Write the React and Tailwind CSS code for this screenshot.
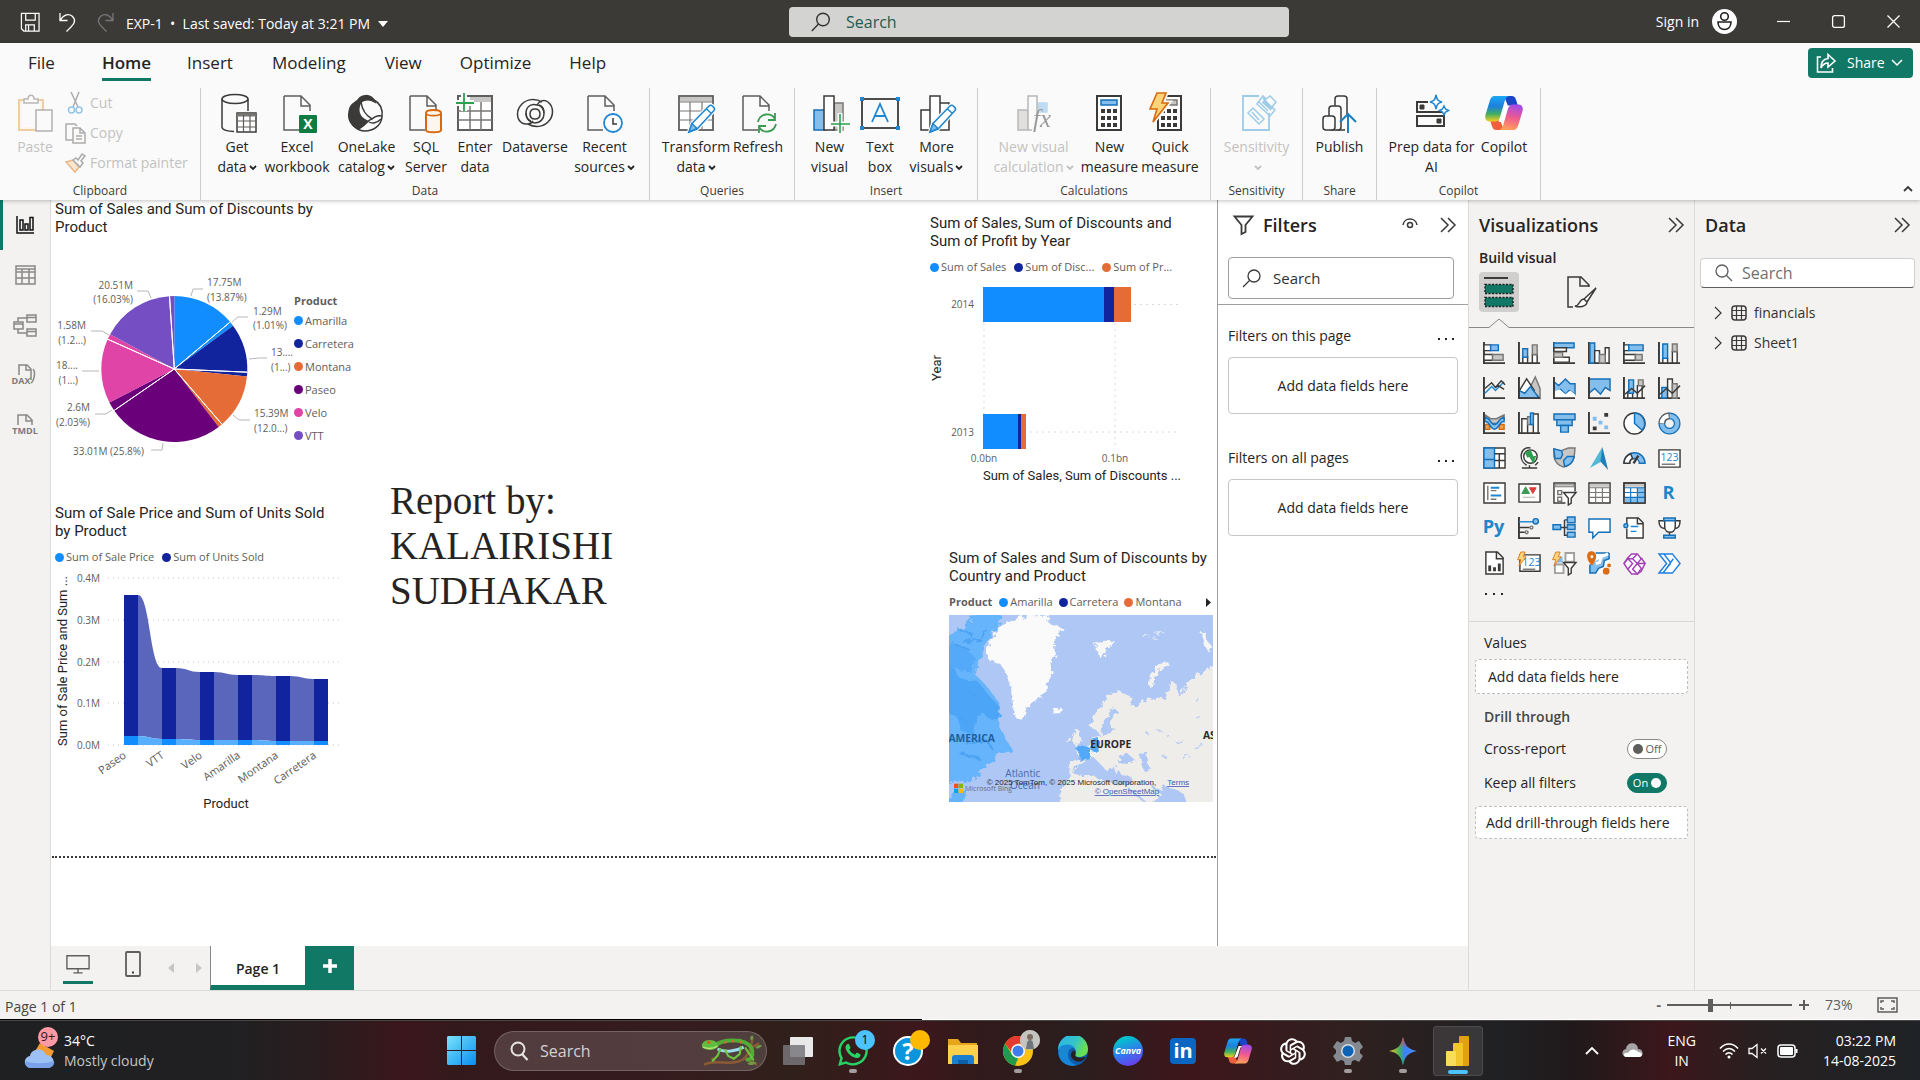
import React from "react";
import { AiOutlineOpenAI } from "react-icons/ai";
import { FaWhatsapp } from "react-icons/fa";

const INK = "#3b3a39";
const BLUE = "#83beec";
const EDGE = "#1570b8";
const GRAY = "#c8c6c4";
const MID = "#797774";
const TEAL = "#117865";

function Icon({ w, h, vb, children, className = "" }) {
  return (
    <svg width={w} height={h} viewBox={vb || `0 0 ${w} ${h}`} fill="none" stroke={INK} strokeWidth="1.5" className={"shrink-0 overflow-visible " + className} aria-hidden="true">
      {children}
    </svg>
  );
}

/* ---------- title bar ---------- */

function TitleBar() {
  return (
    <header className="grid h-[43px] shrink-0 grid-cols-[789fr_500fr_631fr] items-center bg-[#3b3a37] text-white">
      <div className="flex items-center pl-5 pt-1">
        <button aria-label="Save" className="mb-1 w-[38px]">
          <Icon w={20} h={20} vb="0 0 21 21">
            <path d="M1.500 1.500h18.500v18.500H4L1.500 17.500zM6 1.500v7h10v-7M6 20v-6.500h9V20M9 14v6" stroke="#fff" strokeWidth="1.300" />
          </Icon>
        </button>
        <button aria-label="Undo" className="mb-1 w-[37px]">
          <Icon w={18} h={20}>
            <path d="M2 1v7.500h7.500M2 8.500C6 2 11 1.500 14 4c4 3.500 3 7-1 11l-4.500 4.500" stroke="#fff" strokeWidth="1.300" />
          </Icon>
        </button>
        <button aria-label="Redo" className="mb-1 w-[31px]">
          <Icon w={20} h={20}>
            <path d="M18 1v7.500h-7.500M18 8.500C14 2 9 1.500 6 4c-4 3.500-3 7 1 11l4.500 4.500" stroke="#77767a" strokeWidth="1.300" />
          </Icon>
        </button>
        <button className="flex items-center text-sm whitespace-nowrap">
          EXP-1&nbsp;&nbsp;•&nbsp;&nbsp;Last saved: Today at 3:21 PM
          <Icon w={10} h={6} className="ml-2">
            <path d="M0 0h10L5 6z" fill="#fff" stroke="none" />
          </Icon>
        </button>
      </div>
      <label className="flex h-[30px] items-center gap-[15px] rounded-sm bg-[#d3d3d1] pl-[22px]">
        <Icon w={20} h={20}>
          <circle cx="12" cy="7.500" r="6.300" stroke="#33322f" strokeWidth="1.400" />
          <path d="M7.500 12L0.800 19" stroke="#33322f" strokeWidth="1.400" />
        </Icon>
        <input placeholder="Search" aria-label="Search" className="min-w-0 flex-1 bg-transparent text-base text-[#1f5b4e] outline-none placeholder:text-[#1f5b4e]" />
      </label>
      <div className="flex items-center justify-end">
        <button className="mr-[13px] text-sm">Sign in</button>
        <button aria-label="Account" className="mr-10">
          <Icon w={25} h={25}>
            <circle cx="12.500" cy="12.500" r="12.500" fill="#fff" stroke="none" />
            <circle cx="12.500" cy="7.500" r="3.800" stroke="#222" strokeWidth="1.600" />
            <path d="M6 13h13c0 5-3 7.500-6.500 7.500S6 18 6 13z" stroke="#222" strokeWidth="1.600" />
          </Icon>
        </button>
        <button aria-label="Minimize" className="mr-[42px]">
          <Icon w={13} h={13}><path d="M0 6.500h13" stroke="#fff" strokeWidth="1.200" /></Icon>
        </button>
        <button aria-label="Maximize" className="mr-[42px]">
          <Icon w={13} h={13}><rect x=".6" y=".6" width="11.800" height="11.800" rx="2" stroke="#fff" strokeWidth="1.300" /></Icon>
        </button>
        <button aria-label="Close" className="mr-5">
          <Icon w={13} h={13}><path d="M0.500 0.500l12 12M12.500 0.500l-12 12" stroke="#fff" strokeWidth="1.300" /></Icon>
        </button>
      </div>
    </header>
  );
}

/* ---------- ribbon icons ---------- */

const Page = ({ x = 4 }) => <path d={`M${x} 3h17l9 9v6M${x} 3v34h15M${x + 17} 3v10h9`} stroke="#605e5c" />;

const Pencil = () => (
  <>
    <path d="M13 39l3-8.500L33 13c2-2 7 2 5 4.500L21 36z" fill="#fafafa" stroke="#fafafa" strokeWidth="4" />
    <path d="M13 39l3-8.500L33 13c2-2 7 2 5 4.500L21 36zM30.500 16l5 4.500" fill="#fff" stroke="#1f86d1" />
    <path d="M13 39l3-8.500 5 5z" fill={BLUE} stroke="#1f86d1" />
  </>
);

function CopilotMark({ size, id }) {
  return (
    <svg width={size} height={size} viewBox="0 0 40 40" aria-hidden="true" className="shrink-0">
      <defs>
        <linearGradient id={id + "a"} x1="0" y1="0" x2="0" y2="1">
          <stop offset="0" stopColor="#1ba8f5" /><stop offset=".4" stopColor="#1c7fe0" /><stop offset=".7" stopColor="#3fae63" /><stop offset="1" stopColor="#f4cf1b" />
        </linearGradient>
        <linearGradient id={id + "b"} x1=".6" y1="0" x2=".4" y2="1">
          <stop offset="0" stopColor="#a04be8" /><stop offset=".5" stopColor="#ef5a8e" /><stop offset="1" stopColor="#ffa25a" />
        </linearGradient>
      </defs>
      <path d="M20 2h8c3 0 4 2 5 5l1.500 5H24z" fill="#1846c6" />
      <path d="M20 38h-8c-3 0-4-2-5-5l-1.500-5H16z" fill="#f0603c" />
      <path d="M10 2h15c-3 1-4 4-5 8l-4 14c-1 4-3 5-6 5H5c-4 0-5.500-3-4.500-7L5 7c1-3 2.500-5 5-5z" fill={`url(#${id}a)`} />
      <path d="M30 38H15c3-1 4-4 5-8l4-14c1-4 3-5 6-5h5c4 0 5.500 3 4.500 7L35 33c-1 3-2.500 5-5 5z" fill={`url(#${id}b)`} />
      <path d="M21 13h5c-2 1-3 3-3.500 5l-3 10c-.5 1-1 1.500-2 1.500h-3z" fill="#fff" />
    </svg>
  );
}

const bolt = (dx = 0, k = 1) => (
  <path transform={`translate(${dx} 0) scale(${k})`} d="M8 0h9l-4 10h6L4 29l4-13H1z" fill="#fcd57a" stroke="#d8690e" strokeWidth="1.600" />
);

const R = {
  paste: (
    <g opacity=".5">
      <rect x="4" y="7" width="24" height="30" fill="#fdf1dd" stroke="#e6a04c" strokeWidth="2" />
      <rect x="7" y="10" width="18" height="24" fill="#fafafa" stroke="none" />
      <path d="M9 10V6h4c0-5 6-5 6 0h4v4z" fill="#fafafa" stroke={MID} />
      <rect x="21" y="17" width="16" height="21" fill="#fafafa" stroke="#6a6967" />
    </g>
  ),
  getData: (
    <>
      <ellipse cx="18" cy="6" rx="13" ry="4.500" />
      <path d="M5 6v28c0 3 6 4.500 12 4.500M31 6v12" />
      <rect x="20" y="20" width="19" height="19" fill="#fff" />
      <path d="M20 22h19" strokeWidth="3" stroke={MID} />
      <path d="M26.500 22v17M33 22v17M20 28h19M20 34h19" strokeWidth="1.200" stroke="#605e5c" />
    </>
  ),
  excel: (
    <>
      <Page x={7} />
      <rect x="22" y="22" width="18" height="18" rx="1" fill="#107c41" stroke="none" />
      <text x="31" y="36" textAnchor="middle" fill="#fff" stroke="none" fontSize="14" fontWeight="700">X</text>
    </>
  ),
  onelake: (
    <>
      <path d="M12 7C5 10 2 17 3 24c1 8 7 14 15 14s16-5 17-14c1-8-2-14-8-17" strokeWidth="1.600" />
      <path d="M10 9c3-8 14-9 18 0-5-3-10-3-14 0-4 7-3 15 6 19-3 4-6 7-9 8C2 31 0 24 3 15c1-3 4-5 7-6z" fill={INK} />
      <path d="M14 9c1 7 4 13 11 17M11 35c7-1 9-8 14-9 3-3 6-4 10-3M22 29c3 2 8 1 12-3" />
    </>
  ),
  sql: (
    <>
      <Page x={4} />
      <path d="M20 20c0-4 15-4 15 0v17c0 3-15 3-15 0z" fill="#fdf6ee" stroke="#d8690e" strokeWidth="2" />
      <path d="M20 20c0 3.500 15 3.500 15 0" stroke="#d8690e" strokeWidth="1.600" />
    </>
  ),
  enter: (
    <>
      <rect x="3" y="3" width="34" height="34" fill="#fff" stroke="#605e5c" strokeWidth="2" />
      <rect x="15" y="4" width="21" height="5" fill={GRAY} stroke="none" />
      <path d="M3 18h34M3 27h34M15 9v28M26 9v28" stroke={MID} />
      <path d="M9 0v18M1 10h18" stroke="#fafafa" strokeWidth="6" />
      <path d="M9 0v18M1 10h18" stroke="#2e9e4f" strokeWidth="1.800" />
    </>
  ),
  dataverse: (
    <>
      <path d="M27 9C20 5 12 6 7 11c-6 6-6 15 0 19 4 2 9 1 11-2" />
      <path d="M13 31c7 4 15 3 20-2 6-6 6-15 0-20-4-3-9-1-11 3" />
      <path d="M22 12c-6-2-11 2-11 8s4 10 9 10 9-4 9-9-3-9-7-9zM20 16c-3 0-5 2-5 5s2 5 5 5 5-2 5-5-2-5-5-5z" />
      <path d="M11 20c0 4 2 7 5 8M29 20c0-4-2-7-5-8" />
    </>
  ),
  recent: (
    <>
      <Page x={3} />
      <circle cx="28" cy="30" r="9" fill="#fff" stroke="#1f86d1" strokeWidth="1.800" />
      <path d="M28 25v6h4" />
    </>
  ),
  transform: (
    <>
      <rect x="3" y="3" width="34" height="34" fill="#fff" stroke="#605e5c" strokeWidth="1.800" />
      <rect x="4" y="4" width="32" height="4.500" fill={GRAY} stroke="none" />
      <path d="M3 9h34M3 18h34M3 27h34M14 9v28M26 9v28" stroke={MID} strokeWidth="1.200" />
      <Pencil />
    </>
  ),
  refresh: (
    <>
      <Page x={5} />
      <path d="M20 29c2-9 13-10 17-3M37 20v7h-7M38 31c-2 9-13 10-17 3M21 40v-7h7" stroke="#3a9b52" strokeWidth="1.800" />
    </>
  ),
  newVisual: (
    <>
      <rect x="4" y="17" width="11" height="20" fill={BLUE} stroke={EDGE} />
      <rect x="24" y="10" width="9" height="27" fill={GRAY} stroke={MID} />
      <rect x="14" y="3" width="10" height="34" fill="#fff" />
      <path d="M30 20v20M20 31h20" stroke="#fafafa" strokeWidth="5" />
      <path d="M30 21v19M21 31h19" stroke="#2e9e4f" strokeWidth="1.600" />
    </>
  ),
  textBox: (
    <>
      <rect x="2" y="6" width="36" height="29" fill="#fafafa" strokeWidth="1.800" />
      <path d="M0 4h4v4H0zM36 4h4v4h-4zM0 33h4v4H0zM36 33h4v4h-4z" fill="#1f86d1" stroke="none" />
      <path d="M12 29l8-18 8 18M15 23h10" stroke="#1f86d1" strokeWidth="1.800" />
    </>
  ),
  moreVisuals: (
    <>
      <path d="M4 17h9v20H4zM13 3h10v34H13zM23 10h9v27h-9z" fill="#fff" />
      <Pencil />
    </>
  ),
  calc: (
    <g opacity=".5">
      <rect x="4" y="17" width="10" height="20" fill={GRAY} stroke={MID} />
      <rect x="24" y="10" width="9" height="9" fill={BLUE} stroke={BLUE} />
      <path d="M14 37V3h9v22M14 37h4" fill="#fafafa" stroke={MID} />
      <text x="19" y="34" fontFamily="Liberation Serif" fontStyle="italic" fontSize="25" fill={INK} stroke="none">fx</text>
    </g>
  ),
  measure: (
    <>
      <rect x="7" y="3" width="24" height="34" fill="#fff" strokeWidth="2" />
      <rect x="11" y="7" width="16" height="5" fill={BLUE} stroke={EDGE} />
      <path d="M11 18h16M11 25h16M11 32h16" strokeWidth="4" strokeDasharray="4 2" />
    </>
  ),
  quick: (
    <>
      <rect x="8" y="3" width="23" height="34" fill="#fff" strokeWidth="2" />
      <rect x="14" y="7" width="13" height="5" fill={GRAY} stroke={MID} />
      <path d="M11 18h16M11 25h16M11 32h16" strokeWidth="4" strokeDasharray="4 2" />
      <path transform="translate(-1 0)" d="M8 0h9l-4 10h6L4 29l4-13H1z" stroke="#fafafa" strokeWidth="5" />
      {bolt(-1)}
    </>
  ),
  sensitivity: (
    <g opacity=".45" stroke="#2f93d0">
      <path d="M22 3H6v34h26V20" strokeWidth="1.800" />
      <path d="M11 20l5-5 11 11-5 5zM15 19l7 8M22 9l9 9M26 5l9 10M20 11l13 12 5-6-3-3 4-5-6-6-4 3-3-3z" />
      <path d="M26 8l9 8" strokeWidth="4" />
    </g>
  ),
  publish: (
    <>
      <rect x="15" y="3" width="12" height="34" rx="3" />
      <rect x="9" y="13" width="12" height="24" rx="3" fill="#fafafa" />
      <rect x="3" y="23" width="12" height="14" rx="3" fill="#fafafa" />
      <path d="M28 22v18" stroke="#fafafa" strokeWidth="6" />
      <path d="M28 40V21M20 29l8-8 8 8" stroke="#1f7fc0" strokeWidth="2" />
    </>
  ),
  prep: (
    <>
      <path d="M16 9H5v10h27" strokeWidth="2" />
      <rect x="5" y="23" width="27" height="10" strokeWidth="2" />
      <path d="M8 12h4v4H8zM25 26h4v4h-4z" fill={INK} strokeWidth="1" />
      <path d="M24 2c1 5 2 6 6 7-4 1-5 2-6 7-1-5-2-6-6-7 4-1 5-2 6-7zM32 13l1.500 3 3 1.500-3 1.500-1.500 3-1.500-3-3-1.500 3-1.500z" stroke="#1f86d1" fill="#fff" />
    </>
  ),
};

function Caret() {
  return (
    <svg width="8" height="6" viewBox="0 0 8 6" className="ml-0.5 inline-block align-middle" fill="none" stroke="currentColor" strokeWidth="1.800" aria-hidden="true">
      <path d="M1 1l3 3 3-3" />
    </svg>
  );
}

function RibbonButton({ w, icon, lines, caret, disabled, mark }) {
  return (
    <button disabled={disabled} className={`flex shrink-0 flex-col items-center pt-[5px] text-sm leading-5 whitespace-nowrap ${w} ${disabled ? "text-[#c3c2c0]" : "text-[#252423]"}`}>
      <span className="mb-1 flex h-10 w-10 items-center justify-center">{mark || <Icon w={40} h={40}>{R[icon]}</Icon>}</span>
      <span>{lines[0]}</span>
      <span>{lines[1]}{caret && <Caret />}</span>
    </button>
  );
}

function Group({ label, w, children }) {
  return (
    <section className={`flex shrink-0 flex-col border-r border-[#cfcdcb] ${w}`}>
      <div className="flex flex-1 justify-center">{children}</div>
      <div className="h-[17px] text-center text-xs leading-4 text-[#3b3a39]">{label}</div>
    </section>
  );
}

const TABS = [
  ["File", "mr-[47px]"], ["Home", "mr-9"], ["Insert", "mr-[39px]"], ["Modeling", "mr-[39px]"], ["View", "mr-[38px]"], ["Optimize", "mr-[38px]"], ["Help", ""],
];

function Ribbon() {
  return (
    <div className="relative z-10 flex h-[157px] shrink-0 flex-col bg-[#fafafa] shadow-[0_1px_4px_rgba(0,0,0,0.25)]">
      <div className="flex h-[45px] items-start pl-7">
        <nav className="flex pt-1">
          {TABS.map(([t, gap]) => (
            <button key={t} className={`flex h-[34px] items-center border-b-[3px] text-[17px] text-[#252423] ${gap} ${t === "Home" ? "border-[#117865] font-semibold" : "border-transparent"}`}>{t}</button>
          ))}
        </nav>
        <button className="mt-[5px] mr-[7px] ml-auto flex h-[30px] w-[105px] items-center rounded bg-[#117865] pl-2 text-sm text-white">
          <Icon w={20} h={20} className="mr-[11px]">
            <path d="M5 4H1.500v15h15v-4M12 1.500v4C7 6 5 9 5 15c2-4 4-5 7-5v4l7-6z" stroke="#fff" strokeWidth="1.600" />
          </Icon>
          Share
          <Icon w={12} h={8} className="ml-1.5"><path d="M1 1l5 5 5-5" stroke="#fff" /></Icon>
        </button>
      </div>
      <div className="flex h-28">
        <section className="flex w-[201px] shrink-0 flex-col border-r border-[#cfcdcb]">
          <div className="flex flex-1">
            <div className="pl-[17px]"><RibbonButton w="w-9" icon="paste" lines={["Paste", ""]} disabled /></div>
            <div className="flex flex-col pl-3 text-sm text-[#c3c2c0]">
              <button disabled className="flex h-[30px] items-center gap-1">
                <Icon w={21} h={24}><g opacity=".6"><path d="M6 1l7 15M14 1L8 16" stroke={MID} /><circle cx="6.500" cy="19" r="3" stroke="#4fa3dc" /><circle cx="14" cy="19" r="3" stroke="#4fa3dc" /></g></Icon>
                Cut
              </button>
              <button disabled className="flex h-[30px] items-center gap-1">
                <Icon w={21} h={22}><g opacity=".6" stroke={MID}><path d="M8 18H1V2h9l2 2" /><path d="M8 6h7l5 5v10H8zM15 6v5h5M11 14h6M11 17h6" /></g></Icon>
                Copy
              </button>
              <button disabled className="flex h-[30px] items-center gap-1 whitespace-nowrap">
                <Icon w={21} h={20}><g opacity=".6"><path d="M1 9l7-2 6 7-4 5z" fill="#fbd9b0" stroke="#e08a3c" /><path d="M8 7l3-2 2 2 4-6 3 2-4 5 2 2-3 4z" fill="#fafafa" stroke={MID} /></g></Icon>
                Format painter
              </button>
            </div>
          </div>
          <div className="h-[17px] text-center text-xs leading-4 text-[#3b3a39]">Clipboard</div>
        </section>
        <Group label="Data" w="w-[449px]">
          <RibbonButton w="w-[55px]" icon="getData" lines={["Get", "data"]} caret />
          <RibbonButton w="w-[65px]" icon="excel" lines={["Excel", "workbook"]} />
          <RibbonButton w="w-[74px]" icon="onelake" lines={["OneLake", "catalog"]} caret />
          <RibbonButton w="w-[45px]" icon="sql" lines={["SQL", "Server"]} />
          <RibbonButton w="w-[53px]" icon="enter" lines={["Enter", "data"]} />
          <RibbonButton w="w-[67px]" icon="dataverse" lines={["Dataverse", ""]} />
          <RibbonButton w="w-[72px]" icon="recent" lines={["Recent", "sources"]} caret />
        </Group>
        <Group label="Queries" w="w-[145px]">
          <RibbonButton w="ml-1 w-[68px]" icon="transform" lines={["Transform", "data"]} caret />
          <RibbonButton w="w-[56px]" icon="refresh" lines={["Refresh", ""]} />
        </Group>
        <Group label="Insert" w="w-[183px]">
          <RibbonButton w="w-[48px]" icon="newVisual" lines={["New", "visual"]} />
          <RibbonButton w="w-[53px]" icon="textBox" lines={["Text", "box"]} />
          <RibbonButton w="w-[60px]" icon="moreVisuals" lines={["More", "visuals"]} caret />
        </Group>
        <Group label="Calculations" w="w-[233px]">
          <RibbonButton w="w-[95px]" icon="calc" lines={["New visual", "calculation"]} caret disabled />
          <RibbonButton w="w-[57px]" icon="measure" lines={["New", "measure"]} />
          <RibbonButton w="w-[64px]" icon="quick" lines={["Quick", "measure"]} />
        </Group>
        <Group label="Sensitivity" w="w-[92px]">
          <RibbonButton w="w-[76px]" icon="sensitivity" lines={["Sensitivity", ""]} caret disabled />
        </Group>
        <Group label="Share" w="w-[74px]">
          <RibbonButton w="w-[60px]" icon="publish" lines={["Publish", ""]} />
        </Group>
        <Group label="Copilot" w="w-[164px]">
          <RibbonButton w="w-[97px]" icon="prep" lines={["Prep data for", "AI"]} />
          <RibbonButton w="mr-1.5 w-[48px]" lines={["Copilot", ""]} mark={<CopilotMark size={38} id="rc" />} />
        </Group>
        <button aria-label="Collapse the ribbon" className="mr-[6px] ml-auto self-end p-px text-[#252423]">
          <Icon w={10} h={16}><path d="M1 8l4-4 4 4" strokeWidth="1.800" /></Icon>
        </button>
      </div>
    </div>
  );
}

/* ---------- left rail ---------- */

function Rail() {
  const item = "flex h-[50px] w-full items-center justify-center border-l-[3px] pr-[3px]";
  return (
    <nav className="flex w-[51px] shrink-0 flex-col border-r border-[#dddbd9] bg-[#f3f2f1]">
      <button aria-label="Report view" className={item + " border-[#117865]"}>
        <Icon w={18} h={18}><path d="M1 0v17h17" stroke="#111" /><path d="M4 4h3v10H4zM9 8h3v6H9zM14 1.500h3V14h-3z" stroke="#111" /></Icon>
      </button>
      <button aria-label="Table view" className={item + " border-transparent"}>
        <Icon w={21} h={20}><path d="M1 1h19v18H1zM1 7h19M1 13h19M7 4v15M14 4v15M1 4h19" stroke="#8a8886" /></Icon>
      </button>
      <button aria-label="Model view" className={item + " border-transparent"}>
        <Icon w={24} h={23}><path d="M14 1h9v7h-9zM14 15h9v7h-9zM1 8h9v7H1zM1 10h9M14 3.500h9M14 17.500h9M5 8V4h9M5 15v4h9" stroke="#8a8886" /></Icon>
      </button>
      <button aria-label="DAX query view" className={item + " border-transparent"}>
        <Icon w={24} h={22}>
          <path d="M6 11V1h8l4 4v11M13 1v5h5M20 5c3 3 1 12-2 14" stroke="#8a8886" />
          <text x="8" y="20" textAnchor="middle" fontSize="9" fontWeight="700" fill="#7d7b79" stroke="none">DAX</text>
        </Icon>
      </button>
      <button aria-label="TMDL view" className={item + " border-transparent"}>
        <Icon w={24} h={22}>
          <path d="M5 11V1h9l5 5v5M13 1v6h6" stroke="#8a8886" />
          <text x="12" y="20" textAnchor="middle" fontSize="9" fontWeight="700" fill="#7d7b79" stroke="none">TMDL</text>
        </Icon>
      </button>
    </nav>
  );
}

/* ---------- report visuals ---------- */

const SLICES = [
  [13.87, "#118dff"], [1.01, "#118dff"], [10.81, "#12239e"], [0.95, "#12239e"], [12.03, "#e66c37"], [0.93, "#e66c37"],
  [25.8, "#6b007b"], [2.03, "#6b007b"], [14.26, "#e044a7"], [1.23, "#e044a7"], [16.03, "#744ec2"], [1.05, "#744ec2"],
];

function arc(cx, cy, r, from, to) {
  const p = (t) => [cx + r * Math.sin(t * 2 * Math.PI), cy - r * Math.cos(t * 2 * Math.PI)];
  const [x1, y1] = p(from);
  const [x2, y2] = p(to);
  return `M${cx} ${cy}L${x1} ${y1}A${r} ${r} 0 ${to - from > 0.5 ? 1 : 0} 1 ${x2} ${y2}Z`;
}

const Title = ({ children }) => <h2 className="font-[Roboto] text-[15px] leading-[18px] whitespace-nowrap text-[#252423]">{children}</h2>;

function Dots({ items }) {
  return items.map(([c, t]) => (
    <span key={t} className="flex items-center gap-0.5">
      <i className="h-[9px] w-[9px] rounded-full" style={{ background: c }} />
      {t}
    </span>
  ));
}

function PieVisual() {
  let acc = 0;
  const labels = [
    [133, 289, "20.51M", "end"], [133, 303, "(16.03%)", "end"], [207, 286, "17.75M"], [207, 301, "(13.87%)"],
    [253, 315, "1.29M"], [253, 329, "(1.01%)"], [271, 356, "13...."], [271, 371, "(1...)"], [254, 417, "15.39M"], [254, 432, "(12.0...)"],
    [86, 329, "1.58M", "end"], [86, 344, "(1.2...)", "end"], [78, 369, "18....", "end"], [78, 384, "(1...)", "end"],
    [90, 411, "2.6M", "end"], [90, 426, "(2.03%)", "end"], [73, 455, "33.01M (25.8%)"],
  ];
  return (
    <figure className="absolute top-0 left-1">
      <Title>Sum of Sales and Sum of Discounts by<br />Product</Title>
      <div className="flex">
        <svg width="239" height="226" viewBox="55 236 239 226" aria-label="Pie chart" className="overflow-visible">
          {SLICES.map(([v, c], i) => {
            const from = acc / 100;
            acc += v;
            return <path key={i} d={arc(174.3, 369, 73, from, acc / 100)} fill={c} />;
          })}
          {[13.87, 25.69, 38.67, 65.4, 81.69, 98.95].map((v) => (
            <path key={v} d={arc(174.3, 369, 73, v / 100, v / 100)} stroke="#fff" strokeWidth="1" fill="none" />
          ))}
          <g stroke="#b9b7b5" fill="none">
            <path d="M137 291h11l3 7M203 289h-10l-2 7M248 317h-10l-6 5M267 358h-8l-10 1M250 420h-11l-6-5M91 331h11l7 4M82 371h17M95 414h11l6-4M151 450h11l1-7" />
          </g>
          <g fill="#605e5c" fontSize="10">
            {labels.map(([x, y, t, a], i) => <text key={i} x={x} y={y} textAnchor={a || "start"}>{t}</text>)}
          </g>
        </svg>
        <div className="pt-[57px] text-[11px] text-[#605e5c]">
          <div className="font-bold leading-4">Product</div>
          <div className="flex flex-col leading-[23px]">
            <Dots items={[["#118dff", "Amarilla"], ["#12239e", "Carretera"], ["#e66c37", "Montana"], ["#6b007b", "Paseo"], ["#e044a7", "Velo"], ["#744ec2", "VTT"]]} />
          </div>
        </div>
      </div>
    </figure>
  );
}

const COLS = [["Paseo", 124, 595, 736], ["VTT", 162, 668, 739], ["Velo", 200, 672, 740], ["Amarilla", 238, 675, 740], ["Montana", 276, 676, 741], ["Carretera", 314, 679, 741]];

function ribbonPath(i, k) {
  const a = COLS[i];
  const c = COLS[i + 1];
  const x1 = a[1] + 14;
  const x2 = c[1];
  const m = (x1 + x2) / 2;
  const lo = k === 2 ? [a[3], c[3]] : [745, 745];
  return `M${x1} ${a[k]}C${m} ${a[k]} ${m} ${c[k]} ${x2} ${c[k]}V${lo[1]}C${m} ${lo[1]} ${m} ${lo[0]} ${x1} ${lo[0]}Z`;
}

function ColumnVisual() {
  return (
    <figure className="absolute top-[304px] left-1">
      <Title>Sum of Sale Price and Sum of Units Sold<br />by Product</Title>
      <div className="mt-[9px] mb-0.5 flex gap-2 text-[11px] leading-4 text-[#605e5c]">
        <Dots items={[["#118dff", "Sum of Sale Price"], ["#12239e", "Sum of Units Sold"]]} />
      </div>
      <svg width="290" height="245" viewBox="55 567 290 245" aria-label="Ribbon chart">
        {[578, 620, 662, 703, 745].map((y, i) => (
          <g key={y}>
            <path d={`M108 ${y}H342`} stroke="#c8c6c4" strokeDasharray="1 4" />
            <text x="100" y={y + 4} fontSize="10" textAnchor="end" fill="#605e5c">{`0.${4 - i}M`}</text>
          </g>
        ))}
        {COLS.slice(0, 5).map((c, i) => (
          <g key={c[0]}>
            <path d={ribbonPath(i, 2)} fill="#5a66bb" />
            <path d={ribbonPath(i, 3)} fill="#58affe" />
          </g>
        ))}
        {COLS.map(([n, x, top, mid]) => (
          <g key={n}>
            <path d={`M${x} ${top}h14V${mid}h-14z`} fill="#12239e" />
            <path d={`M${x} ${mid}h14V745h-14z`} fill="#118dff" />
            <text transform={`translate(${x + 3} 757) rotate(-35)`} fontSize="11" textAnchor="end" fill="#605e5c">{n}</text>
          </g>
        ))}
        <text x="226" y="808" fontSize="13" textAnchor="middle" fill="#252423" className="font-[Roboto]">Product</text>
        <text transform="translate(67 746) rotate(-90)" fontSize="13" fill="#252423" className="font-[Roboto]">Sum of Sale Price and Sum ...</text>
      </svg>
    </figure>
  );
}

function BarVisual() {
  return (
    <figure className="absolute top-[14px] right-[37px] w-[250px]">
      <Title>Sum of Sales, Sum of Discounts and<br />Sum of Profit by Year</Title>
      <div className="mt-[9px] flex gap-2 text-[11px] leading-4 whitespace-nowrap text-[#605e5c]">
        <Dots items={[["#118dff", "Sum of Sales"], ["#12239e", "Sum of Disc..."], ["#e66c37", "Sum of Pr..."]]} />
      </div>
      <svg width="250" height="210" viewBox="930 275 250 210" aria-label="Stacked bar chart">
        <path d="M984 287V449M1115 287V449M1134 304.500H1180M1030 432H1180" stroke="#dcdad8" strokeDasharray="2 4" />
        <path d="M983 287h121v35H983zM983 414h35v35h-35z" fill="#118dff" />
        <path d="M1104 287h10v35h-10zM1018 414h3v35h-3z" fill="#12239e" />
        <path d="M1114 287h17v35h-17zM1021 414h5v35h-5z" fill="#e66c37" />
        <g fontSize="10" fill="#605e5c">
          <text x="974" y="308" textAnchor="end">2014</text>
          <text x="974" y="436" textAnchor="end">2013</text>
          <text x="984" y="462" textAnchor="middle">0.0bn</text>
          <text x="1115" y="462" textAnchor="middle">0.1bn</text>
        </g>
        <text x="1082" y="480" fontSize="13" textAnchor="middle" fill="#252423" className="font-[Roboto]">Sum of Sales, Sum of Discounts ...</text>
        <text transform="translate(941 368) rotate(-90)" fontSize="13" textAnchor="middle" fill="#252423" className="font-[Roboto]">Year</text>
      </svg>
    </figure>
  );
}

function MapVisual() {
  return (
    <figure className="absolute top-[349px] right-1 w-[264px]">
      <Title>Sum of Sales and Sum of Discounts by<br />Country and Product</Title>
      <div className="mt-[9px] flex items-center gap-1.5 pb-[5px] text-[11px] leading-4 whitespace-nowrap text-[#605e5c]">
        <b className="mr-px">Product</b>
        <Dots items={[["#118dff", "Amarilla"], ["#12239e", "Carretera"], ["#e66c37", "Montana"]]} />
        <Icon w={5} h={9} className="mr-0.5 ml-auto"><path d="M0 0l5 4.500L0 9z" fill="#252423" stroke="none" /></Icon>
      </div>
      <svg width="264" height="187" viewBox="148 255 792 561" aria-label="Map">
        <defs>
          <filter id="coast" x="-5%" y="-5%" width="110%" height="110%">
            <feTurbulence type="fractalNoise" baseFrequency=".06" numOctaves="3" seed="4" />
            <feDisplacementMap in="SourceGraphic" scale="22" />
          </filter>
        </defs>
        <path d="M148 255h792v561H148z" fill="#aec7f4" />
        <g filter="url(#coast)" fill="none">
          <path d="M120 325L185 295L215 265L235 250H305L303 280L265 330L248 355L250 380L235 400L228 435L255 462L285 500L302 525L296 560L302 595L335 655L338 668L300 668L280 695L250 715L228 745L215 752L148 756L130 830H190L200 780L165 790L120 830Z" fill="#66b4fb" />
          <path d="M120 420L160 410L175 440L200 450L235 455L270 500L300 530L292 570L265 565L250 545L225 575L220 615L180 600L175 560L120 540Z" fill="#4ea5f8" />
          <path d="M120 350L170 340L200 360L225 380L215 430L180 420L120 400Z" fill="#55a9f9" />
          <path d="M180 300l40 15-20 20 40-5 20-30M160 340l50 20M200 640l60-10 20 30M180 670l60 15M170 560l40 20M200 480l30 20" stroke="#4ba2f3" strokeWidth="6" />
          <path d="M262 360L270 330L300 290L345 268L400 255L455 260L445 278L492 295L465 330L468 370L455 400L460 430L442 460L440 490L400 515L380 535L370 570L350 565L340 530L338 490L325 440L305 405L285 395L275 400L262 380Z" fill="#fafafa" />
          <path d="M458 540l20-10 12 8-10 12-20 2z" fill="#fafafa" />
          <path d="M585 345l20-5 10-8 30 2-5 14-20 4-4 26-14 8-6-20-10-8zM905 310l14-2 4 26 14 16-8 18-16-22z" fill="#f6f6f5" />
          <path d="M720 318l20-5 10 6zM760 306l20-4 15 6-20 6zM750 325l20-4-4 6z" fill="#d9e3f6" />
          <path d="M748 470l2-35 26-32 34-8-4 10-24 12-18 28-4 28z" fill="#f3f2f1" />
          <path d="M568 590L578 560L598 545L608 515L628 495L655 484L695 500L690 525L712 530L745 506L795 506L805 490L812 450L830 462L838 502L852 480L870 450L905 430L960 395V830H870L850 790L815 770L790 768L780 800L760 816L740 830H475L480 795L510 740L508 690L545 690L530 665L560 650L580 625L605 620L590 600Z" fill="#efedea" />
          <path d="M515 625l10-30 12 5 10 35-20 12zM505 620l6 2-4 18-8-4z" fill="#efedea" />
          <path d="M640 530L620 562L608 580L606 615L640 612L650 600L630 592L632 572L655 545ZM548 700L580 680L620 720L650 705L665 735L700 745L690 765L640 762L600 750L580 735L540 735L515 730ZM660 680L685 672L708 692L690 702L655 700ZM724 672L745 668L742 695L752 715L735 724L722 700ZM690 775l50 40h-8l-46-36zM760 768l30 14-8 8-24-14z" fill="#aec7f4" />
          <path d="M590 688l30 34 10 2-12-18-22-22zM640 706l14 30 6-22z" fill="#efedea" />
          <path d="M526 655l26-10 20 10-2 38-30-4-2-22zM572 630l26-6-2 42-20-2z" fill="#52a9f8" />
          <path d="M740 610l10 2M770 600l16 4M830 640l20-10M880 655l30-12M790 680l12 4M850 690l18-14M890 515l6-10M900 560l-10 4M800 620l8-4" stroke="#b7ccf2" strokeWidth="4" />
        </g>
        <g fontWeight="700" fontSize="31">
          <text x="286" y="636" textAnchor="end" fill="#1d5f9e">AMERICA</text>
          <text x="572" y="653" fill="#2b2b2b">EUROPE</text>
          <text x="910" y="626" fill="#2b2b2b">AS</text>
        </g>
        <g fill="#4a6bb0" fontSize="30">
          <text x="317" y="742">Atlantic</text>
          <text x="331" y="777">Ocean</text>
        </g>
        <path d="M163 761h13v13h-13z" fill="#f25022" /><path d="M177 761h13v13h-13z" fill="#7fba00" />
        <path d="M163 776h13v13h-13z" fill="#00a4ef" /><path d="M177 776h13v13h-13z" fill="#ffb900" />
        <text x="196" y="783" fontSize="21" fill="#6a7078">Microsoft Bing</text>
        <g fontSize="24" className="font-['Liberation_Sans']">
          <text x="261" y="765" fill="#262626">© 2025 TomTom, © 2025 Microsoft Corporation,</text>
          <a href="#terms"><text x="803" y="765" fill="#4355b8" textDecoration="underline">Terms</text></a>
          <a href="#osm"><text x="585" y="792" fill="#4355b8" textDecoration="underline">© OpenStreetMap</text></a>
        </g>
      </svg>
    </figure>
  );
}

function Canvas() {
  return (
    <main className="relative min-h-0 flex-1 overflow-hidden bg-white">
      <PieVisual />
      <ColumnVisual />
      <p className="absolute top-[278px] left-[339px] font-['Liberation_Serif'] text-[39px] leading-[45px] text-[#252423]">Report by:<br />KALAIRISHI<br />SUDHAKAR</p>
      <BarVisual />
      <MapVisual />
      <div className="absolute inset-x-px top-[656px] border-t-2 border-dotted border-[#3b3a39]" />
    </main>
  );
}

/* ---------- panes ---------- */

const Chevrons = ({ label }) => (
  <button aria-label={label}>
    <Icon w={16} h={16}><path d="M1 1l7 7-7 7M8 1l7 7-7 7" /></Icon>
  </button>
);

function FilterSection({ title, gap }) {
  return (
    <section className={gap}>
      <div className="mb-[11px] flex h-5 items-center justify-between pr-1 text-sm">
        {title}
        <button aria-label={title + " options"} className="flex gap-[5px] pt-1.5">
          <i className="h-0.5 w-0.5 bg-[#252423]" /><i className="h-0.5 w-0.5 bg-[#252423]" /><i className="h-0.5 w-0.5 bg-[#252423]" />
        </button>
      </div>
      <div className="flex h-[57px] items-center justify-center rounded-sm border border-[#c8c6c4] text-sm">Add data fields here</div>
    </section>
  );
}

function Filters() {
  return (
    <aside className="w-[251px] shrink-0 border-l border-[#a19f9d] bg-white text-[#252423]">
      <div className="flex h-[50px] items-center pr-3 pl-[15px]">
        <Icon w={21} h={20}><path d="M1.500 1.500h18l-7 8.500v7l-4 2v-9z" strokeWidth="1.800" /></Icon>
        <h2 className="ml-[9px] flex-1 text-lg font-semibold">Filters</h2>
        <button aria-label="Preview filters" className="mr-[22px] pb-1">
          <Icon w={16} h={12}><path d="M1 8C2 0 14 0 15 8" /><circle cx="8" cy="8" r="2.500" /></Icon>
        </button>
        <Chevrons label="Collapse filters" />
      </div>
      <div className="border-b border-[#a19f9d] pt-[7px] pb-[5px] pl-[10px]">
        <label className="mr-[14px] flex h-[42px] items-center gap-3 rounded-sm border border-[#a19f9d] pl-[13px]">
          <Icon w={19} h={19}><circle cx="12" cy="7" r="6" strokeWidth="1.300" /><path d="M7.500 11.500L1 18" strokeWidth="1.300" /></Icon>
          <input placeholder="Search" aria-label="Search filters" className="min-w-0 flex-1 bg-transparent text-[15px] outline-none placeholder:text-[#323130]" />
        </label>
      </div>
      <div className="pr-[10px] pl-[10px]">
        <FilterSection title="Filters on this page" gap="pt-[21px]" />
        <FilterSection title="Filters on all pages" gap="pt-[34px]" />
      </div>
    </aside>
  );
}

const AX = <path d="M1 0v22h22" strokeWidth="2" />;
const b = { fill: BLUE, stroke: EDGE };
const g = { fill: GRAY, stroke: MID };
const w = { fill: "#fff" };

const VISUALS = [
  ["Stacked bar chart", <>{AX}<path d="M1 3h7v6H1zM1 13h9v6H1z" {...w} /><path d="M8 3h8v6H8z" {...b} /><path d="M10 13h11v6H10z" {...g} /></>],
  ["Stacked column chart", <>{AX}<path d="M5 15h5v7H5zM15 13h5v9h-5z" {...w} /><path d="M5 7h5v9H5z" {...b} /><path d="M15 3h5v10h-5z" {...g} /></>],
  ["Clustered bar chart", <>{AX}<path d="M1 1h21v5H1z" {...b} /><path d="M1 6h13v4H1zM1 16h16v5H1z" {...w} /><path d="M1 11h9v5H1z" {...g} /></>],
  ["Clustered column chart", <>{AX}<path d="M2 1h5v21H2z" {...b} /><path d="M7 9h5v13H7zM18 6h4v16h-4z" {...w} /><path d="M12 13h6v9h-6z" {...g} /></>],
  ["100% stacked bar chart", <>{AX}<path d="M1 3h5v6H1zM1 13h12v6H1z" {...w} /><path d="M6 3h15v6H6z" {...b} /><path d="M13 13h7v6h-7z" {...g} /></>],
  ["100% stacked column chart", <>{AX}<path d="M5 17h5v5H5zM15 10h5v12h-5z" {...w} /><path d="M5 2h5v15H5z" {...b} /><path d="M15 2h5v8h-5z" {...g} /></>],
  ["Line chart", <>{AX}<path d="M2 17l7-7 4 4 9-9" stroke="#1f86d1" /><path d="M2 12l7-6 4 5 3-2 6 4M13 11l6-7 4 4" /></>],
  ["Area chart", <><path d="M12 12l6-12 5 12v10z" {...g} /><path d="M1 15L9 2l8 12-4 4z" {...w} /><path d="M1 22V14l6 3 6-7 9 12z" {...b} />{AX}</>],
  ["Stacked area chart", <><path d="M1 5l5 4 7-7 5 5h5v11l-6-4-4 4-5-5-7 5z" {...b} /><path d="M1 15l6-2 6 5 5-4 5 4v4H1z" fill="#fff" stroke="none" />{AX}</>],
  ["100% stacked area chart", <><path d="M1 2h22v12l-5-3-5 7-6-6-6 5z" {...b} />{AX}</>],
  ["Line and stacked column chart", <>{AX}<path d="M5 16h5v6H5zM15 9h5v13h-5z" {...w} /><path d="M6 3h5v14H6z" {...b} /><path d="M16 3h5v6h-5z" {...g} /><path d="M2 18l7-6 6 5 8-8" /></>],
  ["Line and clustered column chart", <>{AX}<path d="M4 11h6v11H4z" {...b} /><path d="M10 2h5v20h-5z" {...w} /><path d="M15 7h5v15h-5z" {...g} /><path d="M2 18l7-6 6 5 8-8" /></>],
  ["Ribbon chart", <><path d="M2 13h5v5H2zM17 13h5v5h-5z" fill="#f3a14b" stroke="#d8690e" /><path d="M2 3l6 4h6l8-4v5l-7 4H9L2 8z" {...g} /><path d="M2 10c5-1 5 8 10 8s5-9 10-8V6c-6-1-5 7-10 7S8 5 2 6z" {...b} />{AX}</>],
  ["Waterfall chart", <>{AX}<path d="M4 7h6v15H4zM16 2h5v20h-5z" {...w} /><path d="M10 5h4v8h-4z" {...g} /><path d="M13 1h3v12h-3z" {...b} /></>],
  ["Funnel chart", <><path d="M1 2h22v6H1z" {...b} /><path d="M4 8h16v6H4z" {...b} /><path d="M8 14h8v7H8z" {...b} /></>],
  ["Scatter chart", <>{AX}<path d="M17 1h4v4h-4zM5 15h4v4H5z" fill={INK} stroke="none" /><path d="M5 5h4v4H5zM11 9h4v4h-4zM17 14h4v4h-4z" fill={BLUE} stroke="none" /></>],
  ["Pie chart", <><circle cx="12" cy="12" r="11" {...w} /><path d="M12 1a11 11 0 0 1 8 18l-8-7z" {...b} /></>],
  ["Donut chart", <><circle cx="12" cy="12" r="8" stroke={EDGE} strokeWidth="7" /><circle cx="12" cy="12" r="8" stroke={BLUE} strokeWidth="4.500" /><path d="M4 12a8 8 0 0 1 8-8" stroke="#605e5c" strokeWidth="7" /><path d="M4 11.500a8 8 0 0 1 7-7.500" stroke="#fff" strokeWidth="4.500" /></>],
  ["Treemap", <><path d="M1 1h22v21H1z" {...w} /><path d="M1 1h11v21H1zM1 13h11" {...b} /><path d="M12 7h11M17 7v15M17 14h6M12 14h5" /></>],
  ["Map", <><circle cx="13" cy="10" r="7" fill="#fff" /><path d="M8 6l5-2 2 5-5 1zM13 11l5-1-2 6z" fill="#2e9e4f" stroke="#2e9e4f" /><path d="M13 1C2-1 0 14 9 19M4 22h16M12 19v3M18 19l3-3" /></>],
  ["Filled map", <><path d="M1 2l7 2 8-3h7l-1 10c-2 6-6 9-11 10C5 19 2 15 1 10z" {...g} /><path d="M1 2l8 2 1 4-2 4H2zM12 20l-1-6 4-4h7c-1 6-5 10-10 10z" {...b} /></>],
  ["Azure map", <><path d="M15 0L2 22l12-7z" fill="#52b8d8" stroke="none" /><path d="M15 0l6 24-8-9z" fill="#1f7fb8" stroke="none" /></>],
  ["Gauge", <><path d="M1 17a11 11 0 0 1 22 0h-6a5 5 0 0 0-10 0z" {...b} /><path d="M1 17a11 11 0 0 1 7-10l2 5a5 5 0 0 0-3 5z" {...w} /><path d="M11 17l5-8" strokeWidth="2.500" /></>],
  ["Card", <><path d="M1 3h22v18H1z" {...w} /><text x="12" y="15" textAnchor="middle" fontSize="11" fill="#1f86d1" stroke="none">123</text><path d="M4 18h14" stroke={MID} /></>],
  ["Multi-row card", <><path d="M1 1h22v21H1z" {...w} /><path d="M5 4v15" stroke={MID} /><path d="M8 6h9M8 14h11" stroke="#1f86d1" strokeWidth="2" /><path d="M8 9h6M8 18h6" stroke={MID} /></>],
  ["KPI", <><path d="M1 2h22v19H1z" {...w} /><path d="M4 12l4-7 4 7z" fill="#3a9b52" stroke="#3a9b52" strokeWidth="1" /><path d="M12 6h7l-3.500 6z" fill="#e03a3a" stroke="#e03a3a" strokeWidth="1" /><path d="M5 16h13" stroke={GRAY} /></>],
  ["Slicer", <><path d="M13 22H1V1h22v9" {...w} /><path d="M2 2h20v3H2z" fill={GRAY} stroke={MID} strokeWidth="1" /><path d="M5 9h4v4H5zM5 16h4v4H5z" stroke={MID} /><path d="M11 11h13l-5 6v5l-3 2v-7z" fill="#fff" /></>],
  ["Table", <><path d="M1 1h22v21H1z" {...w} /><path d="M2 2h20v3H2z" fill={GRAY} stroke="none" /><path d="M1 6h22M1 11h22M1 16h22M8 6v16M15 6v16" stroke={MID} strokeWidth="1.200" /></>],
  ["Matrix", <><path d="M1 1h22v21H1z" {...w} /><path d="M15 6h8v16H1v-6h14z" fill={BLUE} stroke="none" /><path d="M2 2h20v3H2z" fill={GRAY} stroke="none" /><path d="M1 6h22M1 11h22M1 16h22M8 6v16M15 6v16" strokeWidth="1.200" stroke={EDGE} /><path d="M1 1h22v21H1z" /></>],
  ["R script visual", <text x="11" y="18" textAnchor="middle" fontSize="19" fontWeight="700" fill="#1f86c9" stroke="none">R</text>],
  ["Python visual", <text x="11" y="17" textAnchor="middle" fontSize="19" fontWeight="700" fill="#1f86c9" stroke="none">Py</text>],
  ["Key influencers", <>{AX}<path d="M1 5h15" stroke="#1f86d1" /><circle cx="18.500" cy="4.500" r="2.800" {...b} /><path d="M1 11h11M1 16h6" /><circle cx="14" cy="11" r="1.500" stroke={MID} /><circle cx="9" cy="16" r="1.500" stroke={MID} /></>],
  ["Decomposition tree", <><path d="M8 11h8M12 3v16h4M12 3h4" /><path d="M0 8h8v5H0zM15 0h8v6h-8zM15 8h8v5h-8zM15 16h8v5h-8z" {...b} /></>],
  ["Q&A", <path d="M1 2h22v14H11l-6 6v-6H1z" fill="#fff" stroke={EDGE} />],
  ["Smart narrative", <><path d="M4 8V1h12l5 5v16H4V12M15 1v6h6" {...w} /><circle cx="3" cy="9" r="2" {...b} /><path d="M8 10h8M8 15h6" stroke="#1f86d1" /></>],
  ["Metrics", <><path d="M7 2h11v8c0 8-11 8-11 0zM7 4H1c0 5 2 8 6 8M18 4h5c0 5-2 8-5 8M12 16v4" {...w} /><path d="M6 1h12v3H6zM6 19h12v3H6z" {...b} /></>],
  ["Paginated report", <><path d="M3 0h12l6 6v17H3zM14 0v7h7" {...w} /><path d="M7 14v6M12 16v4M17 12v8" strokeWidth="3" /></>],
  ["Card (new)", <><path d="M2 3h21v17H2z" {...w} /><text x="14" y="15" textAnchor="middle" fontSize="11" fill="#1f86d1" stroke="none">123</text><path d="M5 18h13" stroke={MID} />{bolt(-1, 0.5)}</>],
  ["Slicer (new)", <><path d="M13 1h9v9h-9zM2 13h9v9H2z" stroke="#a3a19f" fill="#fff" strokeWidth="2" /><path d="M4 5h6v6H4z" fill={BLUE} stroke="none" />{bolt(-1, 0.5)}<path d="M11 11h13l-5 6v5l-3 2v-7z" fill="#fff" /></>],
  ["ArcGIS map", <><path d="M8 1h14v12l-5 3-3 6H2V11z" fill="#fff" stroke="none" /><path d="M22 1v6l-5 2-1 6-5 2-3 5H2v-9M8 1h14" fill={BLUE} stroke={EDGE} strokeWidth="1.600" /><path d="M8 12l4-1 2-6 7-3" stroke="#fff" strokeWidth="3" /><path d="M4 13C-3 5 0-1 4 0s6 5 0 13z" fill="#dd6b10" stroke="#dd6b10" /><circle cx="4" cy="5" r="1.500" fill="#fff" stroke="none" /><circle cx="19" cy="20" r="3.500" fill="#dd6b10" stroke="none" /><circle cx="22" cy="14" r="2" fill="#dd6b10" stroke="none" /></>],
  ["Power Apps", <g stroke="#a33fb5"><path d="M9 2h6l4 5-4 5 8 0-4 8-4 3H9l-4-5-4-6 4-6z" fill="#fff" /><path d="M19 6l4 6M15 12l-5-5 5-5M15 12l4 5-4 6-5-5zM1 12l4-5 5 5-5 6M5 7l5 0" /></g>],
  ["Power Automate", <g stroke="#1f7fe0"><path d="M1 2h14l8 10-8 10H1l8-10zM6 2l7 9M13 12l-8 10M16 7L6 21" fill="#fff" /></g>],
];

function FieldWell({ children, pad }) {
  return <div className={`mx-1.5 flex items-center rounded-sm border border-dashed border-[#c0bebc] bg-white whitespace-nowrap ${pad}`}>{children}</div>;
}

function Toggle({ id, label, on }) {
  return (
    <div className="flex h-[34px] items-center justify-between pr-[27px] pl-[15px]">
      <label htmlFor={id}>{label}</label>
      <label className={`flex h-5 w-10 items-center justify-center gap-[3px] rounded-full border text-[11px] ${on ? "border-[#117865] bg-[#117865] text-white" : "border-[#8a8886] bg-white text-[#605e5c]"}`}>
        <input id={id} type="checkbox" role="switch" defaultChecked={on} className="sr-only" />
        {on && "On"}
        <i className={`h-[10px] w-[10px] rounded-full ${on ? "bg-white" : "bg-[#605e5c]"}`} />
        {!on && "Off"}
      </label>
    </div>
  );
}

function Visualizations() {
  return (
    <aside className="w-[226px] shrink-0 border-l border-[#dddbd9] bg-[#f3f2f1] text-sm text-[#252423]">
      <div className="flex h-[50px] items-center justify-between pr-[10px] pl-[10px]">
        <h2 className="text-lg font-semibold">Visualizations</h2>
        <Chevrons label="Collapse visualizations" />
      </div>
      <div className="-mt-0.5 pl-[10px] font-semibold">Build visual</div>
      <div className="mt-1 flex h-10 items-center gap-12 pl-[10px]">
        <button aria-label="Build visual" className="flex h-10 w-10 items-center justify-center rounded-sm bg-[#d0cfcd]">
          <Icon w={30} h={32}>
            <path d="M0 2h24" strokeWidth="2" />
            <path d="M1 8.500h28v9H1zM1 21.500h28v9H1z" fill={TEAL} strokeDasharray="2 1.500" stroke="#222" />
          </Icon>
        </button>
        <button aria-label="Format visual">
          <Icon w={30} h={32}><path d="M6 31H1V1h13l8 8v2M13 1v9h9" /><path d="M29 12L17 23l3 3zM17 23c-5 0-4 7-9 7 5 2 12 0 12-4z" fill="#fff" /></Icon>
        </button>
      </div>
      <div className="flex h-4 items-end">
        <span className="w-5 border-b border-[#8a8886]" />
        <svg width="20" height="10" viewBox="0 0 20 10" fill="none" stroke="#8a8886" aria-hidden="true"><path d="M0 9.500L10 1l10 8.500" /></svg>
        <span className="flex-1 border-b border-[#8a8886]" />
      </div>
      <div className="grid w-[222px] grid-cols-[repeat(6,35px)] pt-2 pl-2">
        {VISUALS.map(([name, art]) => (
          <button key={name} title={name} aria-label={name} className="flex h-[35px] items-center justify-center">
            <Icon w={23} h={23} vb="0 0 24 24">{art}</Icon>
          </button>
        ))}
      </div>
      <button aria-label="Get more visuals" className="mb-[14px] flex h-[26px] w-full items-center gap-1.5 pl-4">
        <i className="h-0.5 w-0.5 bg-[#252423]" /><i className="h-0.5 w-0.5 bg-[#252423]" /><i className="h-0.5 w-0.5 bg-[#252423]" />
      </button>
      <div className="border-t border-[#d8d6d4] pt-[11px]">
        <div className="mb-1.5 pl-[15px]">Values</div>
        <FieldWell pad="h-[35px] pl-3">Add data fields here</FieldWell>
        <div className="pt-[13px] pb-[5px] pl-[15px] font-semibold text-[#484644]">Drill through</div>
        <Toggle id="cross" label="Cross-report" />
        <Toggle id="keep" label="Keep all filters" on />
        <FieldWell pad="mt-1.5 h-[33px] pl-2.5">Add drill-through fields here</FieldWell>
      </div>
    </aside>
  );
}

function DataPane() {
  return (
    <aside className="w-[226px] shrink-0 border-l border-[#dddbd9] bg-[#f3f2f1] text-sm text-[#323130]">
      <div className="flex h-[50px] items-center justify-between pr-[10px] pl-[10px]">
        <h2 className="text-lg font-semibold text-[#252423]">Data</h2>
        <Chevrons label="Collapse data" />
      </div>
      <label className="mt-2 mr-[5px] ml-[5px] flex h-[30px] items-center gap-[9px] rounded border border-[#d1d0ce] border-b-[#605e5c] bg-white pl-[14px]">
        <Icon w={18} h={18}><circle cx="7" cy="7" r="6" stroke="#605e5c" strokeWidth="1.300" /><path d="M11.500 11.500L17 17" stroke="#605e5c" strokeWidth="1.300" /></Icon>
        <input placeholder="Search" aria-label="Search data" className="min-w-0 flex-1 bg-transparent text-base outline-none placeholder:text-[#707070]" />
      </label>
      <ul className="pt-[10px]">
        {["financials", "Sheet1"].map((t) => (
          <li key={t}>
            <button className="flex h-[30px] items-center pl-[19px]">
              <Icon w={9} h={14} className="mr-2"><path d="M1 1l6 6-6 6" strokeWidth="1.200" /></Icon>
              <Icon w={16} h={16} className="mr-[7px]"><rect x="1" y="1" width="14" height="14" rx="3" /><path d="M1 5.500h14M1 10.500h14M5.500 1v14M10.500 1v14" strokeWidth="1.200" /></Icon>
              {t}
            </button>
          </li>
        ))}
      </ul>
    </aside>
  );
}

/* ---------- bottom bars ---------- */

function PageTabs() {
  return (
    <div className="flex h-11 shrink-0 items-stretch bg-[#f3f2f1]">
      <button aria-label="Desktop layout" className="ml-3 flex w-[30px] flex-col items-center border-b-[3px] border-[#117865] pt-2 mb-[6px]">
        <Icon w={24} h={22} vb="0 0 26 22"><path d="M1 1h24v14H1zM13 15v4M8 19.500h10" stroke="#605e5c" /></Icon>
      </button>
      <button aria-label="Mobile layout" className="ml-8 pb-2">
        <Icon w={16} h={26}><rect x="1" y="1" width="14" height="24" rx="1" stroke="#605e5c" strokeWidth="1.800" /><path d="M7 21.500h2" strokeWidth="2" /></Icon>
      </button>
      <button aria-label="Previous page" className="ml-[27px]"><Icon w={6} h={10}><path d="M6 0v10L0 5z" fill="#c8c6c4" stroke="none" /></Icon></button>
      <button aria-label="Next page" className="ml-[22px]"><Icon w={6} h={10}><path d="M0 0v10l6-5z" fill="#c8c6c4" stroke="none" /></Icon></button>
      <button className="ml-2 w-[95px] border-b-[5px] border-l border-b-[#117865] border-l-[#8a8886] bg-white pt-1.5 text-sm font-semibold text-[#252423]">Page 1</button>
      <button aria-label="New page" className="flex w-[49px] items-center justify-center bg-[#117865] pb-1">
        <Icon w={14} h={14}><path d="M7 0v14M0 7h14" stroke="#fff" strokeWidth="3.500" /></Icon>
      </button>
    </div>
  );
}

function StatusBar() {
  return (
    <footer className="flex h-[29px] shrink-0 items-center border-t border-[#dddbd9] bg-[#f3f2f1] pt-1 pr-[22px] pl-[5px] text-sm text-[#484644]">
      <span className="flex-1">Page 1 of 1</span>
      <span className="flex items-center pb-1 text-[#605e5c]">
        <button aria-label="Zoom out" className="mr-1.5 font-bold">-</button>
        <span className="relative flex items-center">
          <input type="range" aria-label="Zoom" defaultValue="34" className="h-0.5 w-[125px] appearance-none bg-[#605e5c] [&::-webkit-slider-thumb]:h-[13px] [&::-webkit-slider-thumb]:w-[5px] [&::-webkit-slider-thumb]:appearance-none [&::-webkit-slider-thumb]:bg-[#605e5c]" />
          <i className="absolute left-1/2 h-[7px] w-px bg-[#605e5c]" />
        </span>
        <button aria-label="Zoom in" className="ml-[7px]"><Icon w={10} h={10}><path d="M5 0v10M0 5h10" strokeWidth="2" stroke="#605e5c" /></Icon></button>
        <span className="mr-6 ml-4 w-7">73%</span>
        <button aria-label="Fit to page">
          <Icon w={21} h={16}><path d="M1 1h19v14H1z" stroke="#605e5c" /><path d="M4 6V4h3M14 4h3v2M17 10v2h-3M7 12H4v-2" stroke="#605e5c" /></Icon>
        </button>
      </span>
    </footer>
  );
}

function Gecko() {
  return (
    <svg width="62" height="32" viewBox="0 0 64 32" fill="none" aria-hidden="true">
      <path d="M3 30c14-6 28 2 40-5 6-4 9-11 10-22M14 27l-3-4M44 23l14 7M51 13l9-5" stroke="#8a5a34" strokeWidth="2.500" />
      <path d="M52 5c-3-3 0-5 1-5s2 4-1 5zM56 13c2-4 7-3 7-3s-3 5-7 3zM48 29c4-4 9-1 9-1s-5 5-9 1zM39 3c3 0 5 3 5 5-3 0-6-2-5-5z" fill="#6f9a45" />
      <path d="M15 10c8-6 22-6 30-3 7 3 9 7 8 13-1 4-3 5-5 5" stroke="#4fae36" strokeWidth="4" strokeLinecap="round" />
      <path d="M17 14c8 4 20 2 27-2" stroke="#9adcf0" strokeWidth="3" />
      <path d="M20 14l-3 7-5 5M25 15l3 6 6 3M41 12l-1 7-6 5M46 13l4 6 4 6" stroke="#6cc43f" strokeWidth="2.200" strokeLinecap="round" strokeLinejoin="round" />
      <path d="M1 9c2-5 10-6 15-2l2 4c-4 5-12 5-17 1z" fill="#5fbf3c" />
      <path d="M2 12c5 2 10 2 15-1" stroke="#b7e07a" strokeWidth="1.500" />
      <circle cx="8" cy="7" r="1.800" fill="#d85a2c" /><circle cx="25" cy="7" r="1.300" fill="#e0662c" /><circle cx="33" cy="6" r="1.300" fill="#e0662c" /><circle cx="41" cy="7" r="1.300" fill="#e0662c" />
    </svg>
  );
}

function TaskItem({ label, dot, active, children }) {
  return (
    <button aria-label={label} className={`relative mr-[5px] flex h-[50px] w-[50px] items-center justify-center rounded ${active ? "border border-white/10 bg-white/10" : ""}`}>
      {children}
      {dot && <i className="absolute bottom-[3px] h-1 w-2 rounded-full bg-[#a39d9d]" />}
      {active && <i className="absolute bottom-px h-1 w-5 rounded-full bg-[#4cc2ff]" />}
    </button>
  );
}

const Badge = ({ className, children }) => <span className={`absolute top-[4px] left-[27px] flex h-5 w-5 items-center justify-center rounded-full text-xs text-black ${className}`}>{children}</span>;

function Taskbar() {
  return (
    <div className="shrink-0">
      <div className="h-px bg-[linear-gradient(90deg,#000_48%,#fff_48%)]" />
      <div className="grid h-[60px] grid-cols-[1fr_auto_1fr] items-center border-t border-[#4a4746] bg-[linear-gradient(90deg,#1f2022_0%,#202022_12%,#2a1c1e_17%,#3a161b_21%,#33191b_24%,#351c1d_36%,#30201b_41%,#3c171b_48%,#33191a_50%,#2a1e1e_56%,#3e161b_62%,#30201f_70%,#202124_78%,#20191b_82%,#3c171b_87%,#262021_92%,#1f2226_100%)] text-white">
        <button className="flex items-center gap-2 justify-self-start pl-6 text-left">
          <span className="relative">
            <svg width="32" height="40" viewBox="0 0 32 40" aria-hidden="true">
              <path d="M16 12l14 8-4 8-16-6z" fill="#f49b34" />
              <path d="M7 37c-8 0-8-11-1-12 1-8 14-9 16-1 10 0 10 13 1 13z" fill="#9dc0f5" />
              <path d="M7 37c-5 0-6-5-5-7 6 3 20 3 28 0 1 4-2 7-7 7z" fill="#7aa2e8" />
            </svg>
            <span className="absolute -top-1 left-[14px] flex h-5 w-5 items-center justify-center rounded-full bg-[#ff99a4] text-[13px] text-[#3a1518]">9+</span>
          </span>
          <span className="text-sm leading-5">34°C<br /><span className="text-[#c9c5c5]">Mostly cloudy</span></span>
        </button>
        <div className="flex items-center pl-1">
          <button aria-label="Start" className="mr-2 flex h-[50px] w-[50px] items-center justify-center">
            <svg width="29" height="29" viewBox="0 0 29 29" aria-hidden="true">
              <defs><linearGradient id="win" x1="0" y1="0" x2="1" y2="1"><stop offset="0" stopColor="#78e4fb" /><stop offset="1" stopColor="#0a8cf0" /></linearGradient></defs>
              <path d="M1 0h13v14H0V1zM15 0h13l1 1v13H15zM0 15h14v14H1l-1-1zM15 15h14v13l-1 1H15z" fill="url(#win)" />
            </svg>
          </button>
          <label className="mr-1.5 flex h-10 w-[273px] items-center rounded-full border border-white/20 bg-white/15 pr-[3px] pl-[14px]">
            <Icon w={20} h={20}><circle cx="9" cy="8" r="6.500" stroke="#e8e4e4" strokeWidth="2" /><path d="M13 13l5.500 6" stroke="#e8e4e4" strokeWidth="2.200" /></Icon>
            <input placeholder="Search" aria-label="Search Windows" className="ml-[11px] min-w-0 flex-1 bg-transparent text-base outline-none placeholder:text-[#d6d0d0]" />
            <Gecko />
          </label>
          <TaskItem label="Task view">
            <svg width="30" height="28" viewBox="0 0 30 28" aria-hidden="true"><rect x="7" y="0" width="23" height="20" rx="1" fill="#e9e9ea" /><rect x="0" y="8" width="22" height="20" rx="1" fill="#77757a" fillOpacity=".85" /></svg>
          </TaskItem>
          <TaskItem label="WhatsApp" dot>
            <FaWhatsapp size={34} color="#25d366" />
            <Badge className="bg-[#4cc2ff]">1</Badge>
          </TaskItem>
          <TaskItem label="Get help">
            <span className="flex h-[30px] w-[30px] items-center justify-center rounded-full border-2 border-white bg-[#0a95dd] text-2xl font-bold">?</span>
            <Badge className="bg-[#ffb900]" />
          </TaskItem>
          <TaskItem label="File Explorer">
            <svg width="32" height="28" viewBox="0 0 32 28" aria-hidden="true"><path d="M1 2h10l3 4h16v6H1z" fill="#e7a51b" /><path d="M1 8h30v19H1z" fill="#ffd04c" /><path d="M5 27v-6c0-2 1-3 3-3h16c2 0 3 1 3 3v6z" fill="#1b7fd0" /><path d="M11 23h10v4H11z" fill="#0f5fa8" /></svg>
          </TaskItem>
          <TaskItem label="Chrome" dot>
            <svg width="30" height="30" viewBox="0 0 30 30" aria-hidden="true">
              <circle cx="15" cy="15" r="15" fill="#fbc116" /><path d="M2 7.500A15 15 0 0 1 28 7.500H15L10 18z" fill="#e33b2e" /><path d="M2 7.500l7 11 6 4-3 7.200A15 15 0 0 1 2 7.500z" fill="#229a4b" />
              <circle cx="15" cy="15" r="7" fill="#fff" /><circle cx="15" cy="15" r="5.500" fill="#3f7ee8" />
            </svg>
            <Badge className="bg-[#9a9a9a]"><svg width="20" height="20" viewBox="0 0 20 20" aria-hidden="true"><circle cx="10" cy="10" r="10" fill="#c4c5c1" /><circle cx="10" cy="7" r="3" fill="#7c6a5e" /><path d="M6 19l1-6c0-4 6-4 6 0l1 6z" fill="#6f757c" /></svg></Badge>
          </TaskItem>
          <TaskItem label="Edge">
            <svg width="30" height="30" viewBox="0 0 30 30" aria-hidden="true">
              <defs><linearGradient id="edge" x1="0" y1="0" x2="1" y2=".4"><stop offset="0" stopColor="#27b4ec" /><stop offset=".6" stopColor="#35c4c8" /><stop offset="1" stopColor="#6be04f" /></linearGradient></defs>
              <circle cx="15" cy="15" r="15" fill="#0d5cad" />
              <path d="M0 14A15 15 0 0 1 30 13c0 6-5 8-9 8-3 0-4-1-3-3 1-5-3-8-7-8-5 0-9 2-11 4z" fill="url(#edge)" />
              <path d="M1 12c5-5 13-4 16 0-4-1-7 2-7 7 0 5 4 9 9 10C8 32-2 24 1 12z" fill="#1787d6" />
              <path d="M17 18c-1 3 4 5 11 3-1 2-3 3-4 4-6 2-11-2-11-6 0-3 2-5 4-4z" fill="#2a1e1e" />
            </svg>
          </TaskItem>
          <TaskItem label="Canva">
            <span className="flex h-[30px] w-[30px] items-center justify-center rounded-full bg-[linear-gradient(160deg,#00c4cc_15%,#3a6ff0_60%,#7d2ae8)] text-[9px] font-bold italic">Canva</span>
          </TaskItem>
          <TaskItem label="LinkedIn">
            <span className="flex h-[26px] w-[26px] items-center justify-center rounded-sm bg-[#0a66c2] text-xl font-bold">in</span>
          </TaskItem>
          <TaskItem label="Copilot"><CopilotMark size={28} id="tc" /></TaskItem>
          <TaskItem label="ChatGPT"><AiOutlineOpenAI size={34} /></TaskItem>
          <TaskItem label="Settings" dot>
            <svg width="30" height="30" viewBox="0 0 30 30" aria-hidden="true">
              <path d="M12 1h6l1 4 3 2 4-2 4 6-3 3v3l3 3-4 6-4-2-3 1-1 4h-6l-1-4-3-1-4 2-4-6 3-3v-3L0 11l4-6 4 2 3-2z" fill="#84898f" />
              <circle cx="15" cy="15" r="7" fill="#d8dde2" /><circle cx="15" cy="15" r="5.500" fill="#0c62b4" />
            </svg>
          </TaskItem>
          <TaskItem label="Gemini" dot>
            <svg width="28" height="28" viewBox="0 0 28 28" aria-hidden="true">
              <defs>
                <linearGradient id="gemA" x1="0" y1=".5" x2="1" y2=".5"><stop offset="0" stopColor="#f9c31f" /><stop offset=".4" stopColor="#3fae63" /><stop offset=".55" stopColor="#3b82f6" /><stop offset="1" stopColor="#4a8cf7" /></linearGradient>
                <linearGradient id="gemB" x1="0" y1="0" x2="0" y2="1"><stop offset="0" stopColor="#f0413c" /><stop offset=".4" stopColor="#f0413c" stopOpacity="0" /><stop offset=".7" stopColor="#22b35b" stopOpacity="0" /><stop offset="1" stopColor="#22b35b" /></linearGradient>
              </defs>
              <path d="M14 0c2 9 5 12 14 14-9 2-12 5-14 14C12 19 9 16 0 14 9 12 12 9 14 0z" fill="url(#gemA)" />
              <path d="M14 0c2 9 5 12 14 14-9 2-12 5-14 14C12 19 9 16 0 14 9 12 12 9 14 0z" fill="url(#gemB)" />
            </svg>
          </TaskItem>
          <TaskItem label="Power BI" active>
            <svg width="24" height="30" viewBox="0 0 24 30" aria-hidden="true"><rect x="13" y="0" width="10" height="30" rx="1" fill="#e2a20c" /><rect x="7" y="7" width="10" height="23" rx="1" fill="#f2c52c" /><rect x="0" y="15" width="10" height="15" rx="1" fill="#f9dc5c" /></svg>
          </TaskItem>
        </div>
        <div className="flex items-center justify-self-end pr-6 text-sm leading-5">
          <button aria-label="Show hidden icons" className="mr-[23px]"><Icon w={14} h={9}><path d="M1 8l6-6 6 6" stroke="#fff" strokeWidth="1.800" /></Icon></button>
          <button aria-label="OneDrive" className="mr-6"><svg width="21" height="15" viewBox="0 0 21 15" aria-hidden="true"><path d="M5 14C-1 14-1 7 4 6c1-8 12-7 12 0 6 0 6 8 1 8z" fill="#a7a4a5" /><path d="M4 14c-3 0-3-5 2-4 3-5 8-4 10-1 5 0 5 5 1 5z" fill="#fff" /></svg></button>
          <button className="mr-[23px] text-center">ENG<br />IN</button>
          <span className="mr-[25px] flex items-center gap-[9px]">
            <Icon w={20} h={16}><path d="M1 5.500C6-.5 14-.5 19 5.500M4 8.500c4-4 8-4 12 0M6.500 11.500c2-2.500 5-2.500 7 0" stroke="#fff" /><circle cx="10" cy="14" r="1.500" fill="#fff" stroke="none" /></Icon>
            <Icon w={20} h={16}><path d="M1 5.500h3l5-4v13l-5-4H1zM13 5.500l5 5M18 5.500l-5 5" stroke="#fff" strokeWidth="1.300" /></Icon>
            <Icon w={21} h={14}><rect x="1" y="1" width="17" height="12" rx="3" stroke="#fff" /><rect x="3" y="3" width="13" height="8" rx="1" fill="#fff" stroke="none" /><path d="M19.500 5v4" stroke="#fff" strokeWidth="2" /></Icon>
          </span>
          <button className="text-right">03:22 PM<br />14-08-2025</button>
        </div>
      </div>
    </div>
  );
}

export default function App() {
  return (
    <div className="flex h-screen flex-col overflow-hidden bg-[#f3f2f1] font-['Open_Sans',sans-serif]">
      <TitleBar />
      <Ribbon />
      <div className="flex min-h-0 flex-1">
        <Rail />
        <div className="flex min-w-0 flex-1 flex-col">
          <div className="flex min-h-0 flex-1">
            <Canvas />
            <Filters />
          </div>
          <PageTabs />
        </div>
        <Visualizations />
        <DataPane />
      </div>
      <StatusBar />
      <Taskbar />
    </div>
  );
}
